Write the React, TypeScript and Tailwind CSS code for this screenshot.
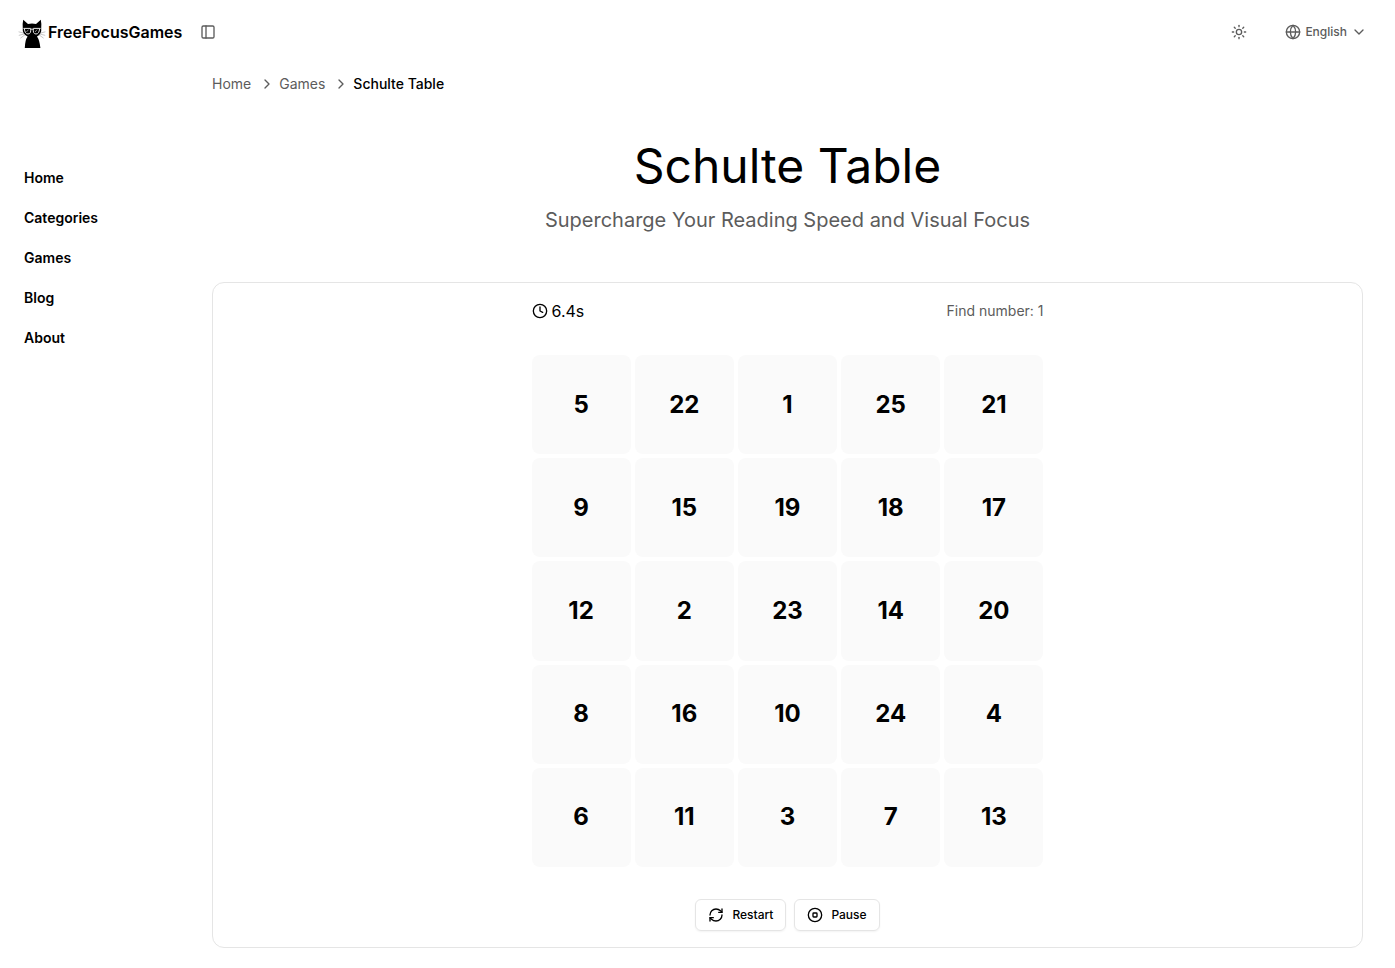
import { useState } from 'react'
import {
  ChevronDown,
  ChevronRight,
  CircleStop,
  Clock,
  Globe,
  PanelLeft,
  RefreshCw,
  Sun,
} from 'lucide-react'

const navItems = ['Home', 'Categories', 'Games', 'Blog', 'About']

const numbers = [
  5, 22, 1, 25, 21,
  9, 15, 19, 18, 17,
  12, 2, 23, 14, 20,
  8, 16, 10, 24, 4,
  6, 11, 3, 7, 13,
]

function CatLogo() {
  return (
    <svg className="h-8 w-8" viewBox="0 0 32 32" fill="none">
      {/* Ears and head */}
      <path
        d="M7.2 3.8 L12 8 Q16 7.2 20 8 L24.8 3.8 Q25.8 8.6 25.2 12.6 Q26 18 21 20.4 Q23.6 24 24.4 32 H8.8 Q9 24 11.6 20.4 Q6 18 6.8 12.6 Q6.2 8.6 7.2 3.8 Z"
        fill="#000"
      />
      {/* Glasses */}
      <path
        d="M7.4 12.4 H14.6 Q15.4 18 12 18 Q8.8 18 8.4 12.6 M24.6 12.4 H17.4 Q16.6 18 20 18 Q23.2 18 23.6 12.6 M14.8 13.4 Q16 12.6 17.2 13.4"
        stroke="#e5e5e5"
        strokeWidth="1"
      />
      <path d="M10.4 16 L12.6 13.6 M19 16 L21.2 13.6" stroke="#bbb" strokeWidth="0.7" />
      {/* Whiskers */}
      <path
        d="M8 17.2 L2.6 15.8 M8 18 L2.8 19.4 M9 18.8 L4.4 22.2 M24 17.2 L29.4 15.8 M24 18 L29.2 19.4 M23 18.8 L27.6 22.2"
        stroke="#777"
        strokeWidth="0.4"
      />
    </svg>
  )
}

function Header() {
  return (
    <header className="flex h-16 items-center justify-between pr-7 pl-4">
      <div className="flex items-center">
        <a href="#" className="flex items-center">
          <CatLogo />
          <span className="font-semibold">FreeFocusGames</span>
        </a>
        <button className="ml-2.5 flex h-8 w-8 items-center justify-center text-[#5c5c5c]">
          <PanelLeft className="h-4 w-4" />
        </button>
      </div>
      <div className="flex items-center text-[#5c5c5c]">
        <button className="mr-[30px] flex h-8 w-8 items-center justify-center">
          <Sun className="h-4 w-4" />
        </button>
        <button className="flex items-center gap-1 text-xs font-medium">
          <Globe className="h-4 w-4" />
          English
          <ChevronDown className="h-4 w-4" />
        </button>
      </div>
    </header>
  )
}

function Breadcrumb() {
  return (
    <nav className="flex h-10 items-center text-sm text-[#5c5c5c]">
      <a href="#">Home</a>
      <ChevronRight className="mr-1 ml-2 h-4 w-4" />
      <a href="#">Games</a>
      <ChevronRight className="mr-1 ml-2 h-4 w-4" />
      <span className="font-medium text-black">Schulte Table</span>
    </nav>
  )
}

export default function App() {
  const [target, setTarget] = useState(1)

  return (
    <div className="min-h-screen bg-white font-[Inter,sans-serif] text-black">
      <Header />
      <div className="flex">
        {/* Sidebar */}
        <aside className="w-[212px] shrink-0 px-6 pt-[98px]">
          <nav className="flex flex-col gap-2">
            {navItems.map((item) => (
              <a key={item} href="#" className="flex h-8 items-center text-sm font-semibold">
                {item}
              </a>
            ))}
          </nav>
        </aside>

        <main className="min-w-0 flex-1 pr-8">
          <Breadcrumb />

          <div className="pt-[38px] text-center">
            <h1 className="text-5xl">Schulte Table</h1>
            <p className="mt-4 text-xl text-[#5c5c5c]">
              Supercharge Your Reading Speed and Visual Focus
            </p>
          </div>

          {/* Game */}
          <div className="mt-12 rounded-xl border border-[#e5e5e5] py-4">
            <div className="mx-auto w-full max-w-lg">
              <div className="flex h-6 items-center justify-between">
                <div className="flex items-center gap-1">
                  <Clock className="h-4 w-4" />
                  <span>6.4s</span>
                </div>
                <span className="text-sm text-[#5c5c5c]">Find number: {target}</span>
              </div>

              <div className="mt-8 grid grid-cols-5 gap-1">
                {numbers.map((n) => (
                  <button
                    key={n}
                    onClick={() => n === target && setTarget(target + 1)}
                    className="flex aspect-square items-center justify-center rounded-lg bg-[#fafafa] text-2xl font-bold"
                  >
                    {n}
                  </button>
                ))}
              </div>

              <div className="mt-8 flex justify-center gap-2">
                <button
                  onClick={() => setTarget(1)}
                  className="flex h-8 items-center gap-2 rounded-md border border-[#e5e5e5] px-3 text-xs font-medium shadow-xs"
                >
                  <RefreshCw className="h-4 w-4" />
                  Restart
                </button>
                <button className="flex h-8 items-center gap-2 rounded-md border border-[#e5e5e5] px-3 text-xs font-medium shadow-xs">
                  <CircleStop className="h-4 w-4" />
                  Pause
                </button>
              </div>
            </div>
          </div>
        </main>
      </div>
    </div>
  )
}
